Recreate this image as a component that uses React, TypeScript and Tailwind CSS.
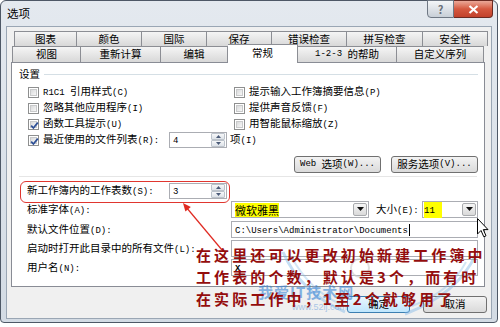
import React from "react";

function T({ s }: { s: string }) {
  const parts = s.match(/[\x00-\x7f]+|[^\x00-\x7f]+/g) || [];
  return (
    <>
      {parts.map((p, i) =>
        /^[\x00-\x7f]+$/.test(p) ? (
          <span key={i} className="font-['Liberation_Mono',monospace] text-[9px] whitespace-pre">
            {p}
          </span>
        ) : (
          <span key={i}>{p}</span>
        )
      )}
    </>
  );
}

function Cb({ checked }: { checked?: boolean }) {
  return (
    <span className="w-[11px] h-[11px] flex-none border border-[#8e8f8f] bg-white p-px">
      <span className="relative block w-full h-full border border-[#c9cacb] bg-gradient-to-br from-[#d9dadb] to-[#f7f7f7]">
        {checked && (
          <svg className="absolute -left-[2px] -top-[2px]" width="11" height="11" viewBox="0 0 11 11">
            <path d="M2.2 5.6 L4.4 8 L8.8 2.6" fill="none" stroke="#2d4f96" strokeWidth="1.7" />
          </svg>
        )}
      </span>
    </span>
  );
}

function CheckRow({ label, checked }: { label: string; checked?: boolean }) {
  return (
    <div className="h-[16px] flex items-center gap-[4px]">
      <Cb checked={checked} />
      <span className="leading-[14px] whitespace-nowrap">
        <T s={label} />
      </span>
    </div>
  );
}

function Spin({ v }: { v: string }) {
  return (
    <div className="flex-none w-[58px] h-[16px] border border-[#abadb3] bg-white flex items-center">
      <span className="flex-1 pl-[3px] leading-[14px]">
        <T s={v} />
      </span>
      <div className="w-[14px] h-[14px] flex flex-col mr-px">
        <div className="h-[7px] border border-[#bcc3cb] rounded-[1px] bg-gradient-to-b from-[#f7f8f9] to-[#dde2e8] flex items-center justify-center">
          <svg width="5" height="3" viewBox="0 0 5 3">
            <path d="M0 3 L2.5 0 L5 3 Z" fill="#4b5b78" />
          </svg>
        </div>
        <div className="h-[7px] border border-[#bcc3cb] rounded-[1px] bg-gradient-to-b from-[#f7f8f9] to-[#dde2e8] flex items-center justify-center">
          <svg width="5" height="3" viewBox="0 0 5 3">
            <path d="M0 0 L2.5 3 L5 0 Z" fill="#4b5b78" />
          </svg>
        </div>
      </div>
    </div>
  );
}

function DropBtn() {
  return (
    <div className="w-[14px] h-[13px] border border-[#a9abae] rounded-[2px] bg-gradient-to-b from-[#f6f6f6] to-[#d9d9d9] flex flex-col items-center justify-center">
      <svg width="7" height="5" viewBox="0 0 7 5">
        <path d="M0 0 L7 0 L3.5 4 Z" fill="#111" />
      </svg>
    </div>
  );
}

function Tab({ w, label, first, h = "h-[15px]" }: { w: string; label: string; first?: boolean; h?: string }) {
  return (
    <div
      className={`${w} ${h} ${first ? "border-l" : ""} border-t border-r border-[#8c8e94] bg-gradient-to-b from-[#f5f5f5] to-[#d8d8d8] flex items-center justify-center leading-none whitespace-nowrap`}
    >
      <T s={label} />
    </div>
  );
}

export default function App() {
  return (
    <div className="w-[500px] h-[327px] bg-white relative overflow-hidden font-['Noto_Sans_CJK_SC',sans-serif] text-[10.5px] text-black">
      <div className="w-[498px] h-[323px] border border-[#4e5866] rounded-t-[6px] rounded-b-[4px] bg-gradient-to-b from-[#e4e9ef] to-[#d3dbe4] flex flex-col">
        {/* title bar */}
        <div className="h-[25px] flex items-start">
          <div className="pl-[6px] pt-[5px] text-[11.5px] leading-[14px]">选项</div>
          <div className="ml-auto mr-[4px] -mt-px flex">
            <div className="w-[27px] h-[18px] border border-[#6f7884] rounded-bl-[4px] bg-gradient-to-b from-[#f4f6f8] to-[#c8cfd7] flex items-center justify-center text-[11px] font-bold text-[#6a7079] leading-none">
              ?
            </div>
            <div className="w-[39px] h-[18px] border border-l-0 border-[#6b2a22] rounded-br-[4px] bg-gradient-to-b from-[#eaa898] via-[#d5583f] to-[#c2412b] flex items-center justify-center">
              <svg width="11" height="9" viewBox="0 0 11 9">
                <path d="M1.5 1 L9.5 8 M9.5 1 L1.5 8" stroke="#fff" strokeWidth="2.2" />
              </svg>
            </div>
          </div>
        </div>

        {/* client */}
        <div className="mx-[5px] h-[293px] border border-[#9aa6b4] bg-[#f0f0f0] flex flex-col">
          {/* tab row 1 */}
          <div className="mt-[4px] pl-[7px] flex">
            <Tab w="w-[63px]" label="图表" first />
            <Tab w="w-[65px]" label="颜色" />
            <Tab w="w-[65px]" label="国际" />
            <Tab w="w-[65px]" label="保存" />
            <Tab w="w-[75px]" label="错误检查" />
            <Tab w="w-[76px]" label="拼写检查" />
            <Tab w="w-[65px]" label="安全性" />
          </div>
          {/* tab row 2 */}
          <div className="pl-[5px] flex items-end h-[16px]">
            <Tab w="w-[69px]" label="视图" first h="h-[16px]" />
            <Tab w="w-[80px]" label="重新计算" h="h-[16px]" />
            <Tab w="w-[67px]" label="编辑" h="h-[16px]" />
            <div className="relative z-10 w-[70px] h-[19px] -mb-px border-t border-r border-[#8c8e94] bg-white flex items-center justify-center leading-none pb-[2px]">
              常规
            </div>
            <Tab w="w-[99px]" label="1-2-3 的帮助" h="h-[16px]" />
            <Tab w="w-[87px]" label="自定义序列" h="h-[16px]" />
          </div>

          {/* page */}
          <div className="ml-[4px] w-[474px] h-[225px] border border-[#898c95] bg-white flex flex-col">
            <div className="mt-[4px] h-[14px] flex items-center pl-[7px] pr-[6px]">
              <span className="leading-[14px]">设置</span>
              <div className="flex-1 h-px bg-[#d5dfe5] ml-[4px]" />
            </div>

            <div className="mt-[3px] flex pl-[16px]">
              <div className="w-[206px] flex-none flex flex-col">
                <CheckRow label="R1C1 引用样式(C)" />
                <CheckRow label="忽略其他应用程序(I)" />
                <CheckRow label="函数工具提示(U)" checked />
                <div className="h-[16px] flex items-center">
                  <div className="w-[141px] flex-none flex items-center gap-[4px]">
                    <Cb checked />
                    <span className="leading-[14px] whitespace-nowrap">
                      <T s="最近使用的文件列表(R):" />
                    </span>
                  </div>
                  <Spin v="4" />
                  <span className="ml-[3px] leading-[14px] whitespace-nowrap">
                    <T s="项(I)" />
                  </span>
                </div>
              </div>
              <div className="flex flex-col">
                <CheckRow label="提示输入工作簿摘要信息(P)" />
                <CheckRow label="提供声音反馈(F)" />
                <CheckRow label="用智能鼠标缩放(Z)" />
              </div>
            </div>

            <div className="mt-[8px] flex justify-end gap-[10px] pr-[6px]">
              <div className="w-[87px] h-[17px] border border-[#707070] rounded-[3px] bg-gradient-to-b from-[#f3f3f3] to-[#dadada] flex items-center justify-center leading-none">
                <T s="Web 选项(W)..." />
              </div>
              <div className="w-[87px] h-[17px] border border-[#707070] rounded-[3px] bg-gradient-to-b from-[#f3f3f3] to-[#dadada] flex items-center justify-center leading-none">
                <T s="服务选项(V)..." />
              </div>
            </div>

            <div className="mt-[3px] mx-[7px] h-px bg-[#e6e6e6]" />

            <div className="pl-[15px] flex flex-col">
              <div className="mt-[5px] h-[17px] flex items-center">
                <span className="w-[142px] flex-none leading-[14px] whitespace-nowrap">
                  <T s="新工作簿内的工作表数(S):" />
                </span>
                <Spin v="3" />
              </div>
              <div className="mt-[2px] h-[17px] flex items-center">
                <span className="w-[204px] flex-none leading-[14px] whitespace-nowrap">
                  <T s="标准字体(A):" />
                </span>
                <div className="w-[138px] flex-none h-[17px] border border-[#abadb3] bg-white flex items-center pl-[3px] pr-px">
                  <span className="bg-[#ffff00] text-[11px] leading-[14px]">微软雅黑</span>
                  <div className="ml-auto">
                    <DropBtn />
                  </div>
                </div>
                <span className="ml-[7px] w-[46px] flex-none leading-[14px] whitespace-nowrap">
                  <T s="大小(E):" />
                </span>
                <div className="w-[56px] flex-none h-[17px] border border-[#abadb3] bg-white flex items-center pl-[1px] pr-px">
                  <span className="bg-[#ffff00] w-[18px] leading-[14px]">
                    <T s="11" />
                  </span>
                  <div className="ml-auto">
                    <DropBtn />
                  </div>
                </div>
              </div>
              <div className="mt-[3px] h-[17px] flex items-center">
                <span className="w-[204px] flex-none leading-[14px] whitespace-nowrap">
                  <T s="默认文件位置(D):" />
                </span>
                <div className="w-[247px] flex-none h-[17px] border border-[#abadb3] bg-white flex items-center pl-[3px]">
                  <span className="leading-[14px]">
                    <T s="C:\Users\Administrator\Documents" />
                  </span>
                  <span className="w-px h-[12px] bg-black ml-px" />
                </div>
              </div>
              <div className="mt-[2px] h-[17px] flex items-center">
                <span className="w-[204px] flex-none leading-[14px] whitespace-nowrap">
                  <T s="启动时打开此目录中的所有文件(L):" />
                </span>
                <div className="w-[247px] flex-none h-[17px] border border-[#abadb3] bg-white" />
              </div>
              <div className="mt-[2px] h-[17px] flex items-center">
                <span className="w-[204px] flex-none leading-[14px] whitespace-nowrap">
                  <T s="用户名(N):" />
                </span>
                <div className="w-[247px] flex-none h-[17px] border border-[#abadb3] bg-white flex items-center pl-[3px]">
                  <span className="leading-[14px] font-bold">
                    <T s="X" />
                  </span>
                </div>
              </div>
            </div>
          </div>

          {/* bottom buttons */}
          <div className="mt-[9px] flex justify-end gap-[13px] pr-[4px]">
            <div className="w-[63px] h-[17px] border border-[#3c7fb1] rounded-[3px] bg-gradient-to-b from-[#eaf6fd] to-[#bee6fd] flex items-center justify-center leading-none">
              确定
            </div>
            <div className="w-[64px] h-[17px] border border-[#707070] rounded-[3px] bg-gradient-to-b from-[#f3f3f3] to-[#dadada] flex items-center justify-center leading-none">
              取消
            </div>
          </div>
        </div>
      </div>

      {/* watermark */}
      <svg className="absolute left-0 top-0 pointer-events-none" width="500" height="327">
        <path d="M283 252 Q300 292 345 312" fill="none" stroke="#7fb6e6" strokeWidth="3" opacity="0.45" />
        <path d="M292 258 Q310 290 340 304" fill="none" stroke="#7fb6e6" strokeWidth="2" opacity="0.35" />
        <path d="M476 254 Q458 294 405 314" fill="none" stroke="#7fb6e6" strokeWidth="3" opacity="0.45" />
        <path d="M466 262 Q450 292 412 306" fill="none" stroke="#7fb6e6" strokeWidth="2" opacity="0.35" />
        <circle cx="360" cy="268" r="9" fill="none" stroke="#c9c9c9" strokeWidth="2" opacity="0.6" />
      </svg>
      <div className="absolute left-[258px] top-[283px] text-[15px] font-bold text-[#3a86d6] opacity-60 leading-[18px] tracking-[1px] pointer-events-none whitespace-nowrap">
        我爱IT技术网
      </div>
      <div className="absolute left-[292px] top-[302px] text-[9px] text-[#3a86d6] opacity-40 leading-[10px] pointer-events-none font-['Liberation_Sans',sans-serif]">
        www.52ij.com
      </div>

      {/* red highlight */}
      <div className="absolute left-[20px] top-[181px] w-[210px] h-[22px] border-[1.5px] border-[#e0362f] rounded-[6px] pointer-events-none" />
      <svg className="absolute left-0 top-0 pointer-events-none" width="500" height="327">
        <line x1="222" y1="250" x2="186" y2="207" stroke="#e02a22" strokeWidth="1.2" />
        <polygon points="183,203 190.8,207 185.4,211.4" fill="#e02a22" />
      </svg>

      {/* annotation */}
      <div className="absolute left-[196px] top-[244px] text-[15px] font-bold text-[#940d0d] leading-[22px] tracking-[3.1px] whitespace-nowrap pointer-events-none">
        <div>在这里还可以更改初始新建工作簿中</div>
        <div>工作表的个数，默认是3个，而有时</div>
        <div>在实际工作中，1至2个就够用了</div>
      </div>

      {/* mouse cursor */}
      <svg className="absolute left-[477px] top-[218px] pointer-events-none" width="13" height="20" viewBox="0 0 13 20">
        <path d="M0.5 0.5 L0.5 16 L4 12.5 L6.8 18.8 L9 17.8 L6.3 11.6 L11 11.6 Z" fill="#fff" stroke="#000" strokeWidth="1" />
      </svg>
    </div>
  );
}
